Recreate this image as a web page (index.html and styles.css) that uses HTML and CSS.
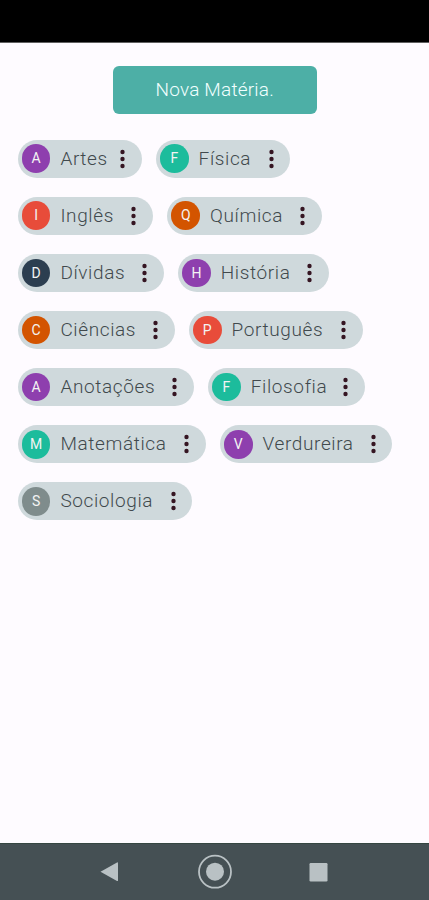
FILE: index.html
```
<!DOCTYPE html>
<html lang="pt-BR">
<head>
<meta charset="utf-8">
<title>Matérias</title>
<link rel="stylesheet" href="styles.css">
</head>
<body>
<header class="status-bar"></header>
<main class="content">
<button class="new-subject">Nova Matéria.</button>
<div class="subjects" id="subjects"></div>
</main>
<nav class="nav-bar">
<svg width="429" height="57" viewBox="0 0 429 57" fill="#b9c1c4">
<path d="M100.5 28.7 L117 19.5 Q118 19 118 20.2 V37.2 Q118 38.4 117 37.9Z"/>
<circle cx="215" cy="28.7" r="16" fill="none" stroke="#b9c1c4" stroke-width="1.8"/>
<circle cx="215" cy="28.7" r="9"/>
<rect x="309.5" y="20" width="18" height="18.5" rx="1.2"/>
</svg>
</nav>
<script src="script.js"></script>
</body>
</html>
```
FILE: styles.css
```
* { box-sizing: border-box; }
body {
  margin: 0;
  height: 900px;
  display: flex;
  flex-direction: column;
  background: #fefbff;
  font-family: Roboto, sans-serif;
  overflow: hidden;
}
.status-bar {
  height: 43px;
  background: #000;
  border-bottom: 1px solid #606060;
  flex: none;
}
.content {
  flex: 1;
  display: flex;
  flex-direction: column;
  padding: 23px 17px 0 17.5px;
}
.new-subject {
  align-self: center;
  width: 204px;
  height: 48px;
  border: 0;
  border-radius: 6px;
  padding: 0;
  background: #4dafa6;
  color: #f2ffff;
  font: 300 19px/48px Roboto, sans-serif;
  letter-spacing: 0.2px;
}
.subjects {
  display: flex;
  flex-direction: column;
  gap: 19.15px;
  margin-top: 25.6px;
}
.row { display: flex; gap: 14.2px; }
.chip {
  flex: none;
  height: 38px;
  border-radius: 19px;
  background: #cfd9dc;
  display: flex;
  align-items: center;
  padding: 0 16.7px 0 4.3px;
}
.avatar {
  width: 28.6px;
  height: 28.6px;
  border-radius: 50%;
  color: #f3f3f3;
  font-size: 14px;
  line-height: 29.6px;
  text-align: center;
}
.purple { background: #8e3fae; }
.green { background: #1cbc9c; }
.red { background: #e84c3a; }
.orange { background: #d35400; }
.navy { background: #2c3e50; }
.gray { background: #7f8c8c; }
.label {
  margin-left: 10px;
  color: #41494d;
  font-size: 19px;
  line-height: 24px;
  font-weight: 300;
  letter-spacing: 0.62px;
  white-space: nowrap;
  margin-bottom: 0.2px;
}
.menu {
  margin-left: auto;
  flex: none;
  fill: #351522;
}
.nav-bar {
  flex: none;
  height: 57px;
  background: #455054;
  border-top: 1px solid #354641;
}
.nav-bar svg { display: block; margin-top: -1px; }
```
FILE: script.js
```
const rows = [
  [["Artes", "purple", 124], ["Física", "green", 134.5]],
  [["Inglês", "red", 135.5], ["Química", "orange", 154.7]],
  [["Dívidas", "navy", 146.2], ["História", "purple", 151]],
  [["Ciências", "orange", 157], ["Português", "red", 174]],
  [["Anotações", "purple", 176.2], ["Filosofia", "green", 157]],
  [["Matemática", "green", 188], ["Verdureira", "purple", 172.8]],
  [["Sociologia", "gray", 174.8]]
];
document.getElementById("subjects").innerHTML = rows.map(row =>
  `<div class="row">${row.map(([name, color, width]) =>
    `<div class="chip" style="width:${width}px"><span class="avatar ${color}">${name[0]}</span><span class="label">${name}</span><svg class="menu" width="5" height="20" viewBox="0 0 5 20"><circle cx="2.5" cy="3" r="2.2"/><circle cx="2.5" cy="10" r="2.2"/><circle cx="2.5" cy="17" r="2.2"/></svg></div>`
  ).join("")}</div>`
).join("");
```
